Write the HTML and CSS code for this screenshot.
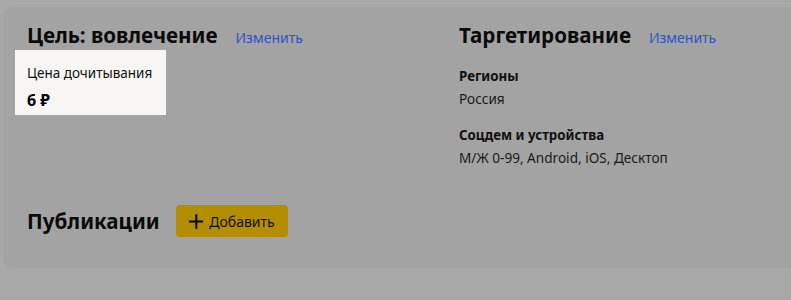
FILE: index.html
```html
<!DOCTYPE html>
<html lang="ru">
<head>
<meta charset="utf-8">
<link rel="stylesheet" href="styles.css">
</head>
<body>
<div class="page">
  <div class="card">
    <div class="columns">
      <section class="col">
        <div class="head">
          <h2 class="title">Цель: вовлечение</h2>
          <a class="link">Изменить</a>
        </div>
        <div class="highlight">
          <div class="label">Цена дочитывания</div>
          <div class="price">6 ₽</div>
        </div>
      </section>
      <section class="col">
        <div class="head">
          <h2 class="title">Таргетирование</h2>
          <a class="link">Изменить</a>
        </div>
        <div class="field">
          <div class="field-name">Регионы</div>
          <div class="field-value">Россия</div>
        </div>
        <div class="field">
          <div class="field-name">Соцдем и устройства</div>
          <div class="field-value">М/Ж 0-99, Android, iOS, Десктоп</div>
        </div>
      </section>
    </div>
    <div class="pubs">
      <h2 class="title">Публикации</h2>
      <button class="add">
        <svg width="15" height="15" viewBox="0 0 15 15"><path d="M7.5 0v15M0 7.5h15" stroke="#000" stroke-width="2"/></svg>
        <span>Добавить</span>
      </button>
    </div>
  </div>
</div>
</body>
</html>
```
FILE: styles.css
```css
* { box-sizing: border-box; }
html, body { margin: 0; padding: 0; }
body {
  background: #a8a8a8;
  font-family: "Noto Sans", "Open Sans", sans-serif;
  color: #000;
  width: 791px;
  height: 300px;
  overflow: hidden;
}
.page { padding: 7px 0 0 3px; }
.card {
  background: #a3a3a3;
  border-radius: 10px 0 0 10px;
  width: 800px;
  height: 261px;
  padding: 14px 24px 0 24px;
}
.columns {
  display: grid;
  grid-template-columns: 432px 1fr;
}
.head {
  display: flex;
  align-items: baseline;
  gap: 18px;
  height: 28px;
}
.title {
  margin: 0;
  font-size: 20.6px;
  font-weight: 700;
  line-height: 28px;
  color: #0a0a0a;
}
.link {
  font-size: 14px;
  color: #2b58bf;
  text-decoration: none;
}
.highlight {
  margin: 1px 0 0 -12px;
  width: 151px;
  height: 65px;
  background: #f7f6f4;
  padding: 14px 12px 0 12px;
}
.label { font-size: 13.5px; line-height: 18px; color: #111; }
.price { font-size: 16px; font-weight: 700; line-height: 20px; margin-top: 8px; }
.field { margin-top: 18px; }
.field + .field { margin-top: 18px; }
.field-name { font-size: 13.3px; font-weight: 700; line-height: 18px; color: #111; }
.field-value { font-size: 13.6px; line-height: 18px; margin-top: 5px; color: #1a1a1a; }
.pubs {
  display: flex;
  align-items: center;
  gap: 16px;
  margin-top: 38px;
}
.add {
  display: flex;
  align-items: center;
  gap: 6px;
  height: 32px;
  width: 112px;
  padding: 0 13px;
  border: 0;
  border-radius: 4px;
  background: #b38e00;
  font-family: inherit;
  font-size: 14px;
  color: #111;
}
```
